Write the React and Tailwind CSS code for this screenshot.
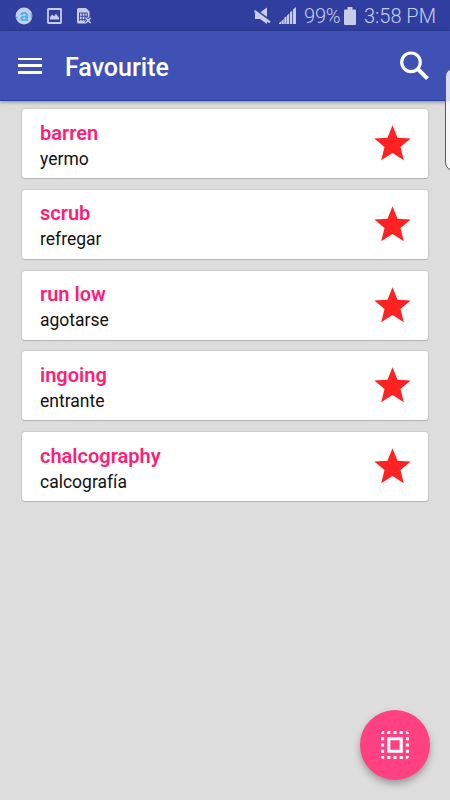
import React, { useState } from 'react';

const WORDS = [
    { id: 1, word: 'barren', translation: 'yermo' },
    { id: 2, word: 'scrub', translation: 'refregar' },
    { id: 3, word: 'run low', translation: 'agotarse' },
    { id: 4, word: 'ingoing', translation: 'entrante' },
    { id: 5, word: 'chalcography', translation: 'calcografía' },
];

function StatusBar() {
    return (
        <div className="flex h-[31px] shrink-0 items-center bg-[#303f9f] pl-[15px] pr-[14px] text-[#c9cdea]">
            <svg className="h-[18px] w-[18px] overflow-visible" viewBox="0 0 18 18">
                <circle cx="9" cy="9" r="8.4" fill="#c9cdea" />
                <circle cx="1.6" cy="10.5" r="1.1" fill="#4fb0e6" />
                <path d="M16.2 6v5.500" stroke="#4fb0e6" strokeWidth="1.2" />
                <text x="9" y="13.500" textAnchor="middle" fontFamily="Roboto" fontWeight="700" fontSize="17" fill="#4fb0e6">a</text>
            </svg>
            <svg className="ml-[14px] h-[16px] w-[15px]" viewBox="0 0 15 16">
                <rect x="1" y="1" width="13" height="14" rx="0.5" fill="none" stroke="currentColor" strokeWidth="1.8" />
                <path d="M3 11.5V9l2.2-2.4L7 8.2l2-2.5 3 3.8v2z" fill="currentColor" />
            </svg>
            <svg className="ml-[15px] h-[16px] w-[15px]" viewBox="0 0 15 16">
                <path d="M0 1.5Q0 0 1.500 0H9l3.500 3.500V9L11 10.500 9 9v6.500H1.500Q0 15.500 0 14z" fill="currentColor" />
                <path d="M2 5h8.500M2 8.300h8.500M2 11.600h6M2.500 5v8M5.200 5v8M7.900 5v8M10.300 5v4" stroke="#303f9f" strokeWidth="0.9" fill="none" />
                <path d="M8.500 9.800l5.200 5.200M13.700 9.800L8.500 15" stroke="#303f9f" strokeWidth="3" />
                <path d="M8.700 10l4.900 5M13.600 10l-4.900 5" stroke="currentColor" strokeWidth="1.6" />
            </svg>

            <svg className="ml-auto h-[18px] w-[17px]" viewBox="0 0 17 18">
                <path d="M1 5.500H6l7-5v16.500l-7-5H1z" fill="currentColor" />
                <path d="M0 2L16 13.500" stroke="#303f9f" strokeWidth="2.200" />
                <path d="M0.500 3.800L16 15.300" stroke="currentColor" strokeWidth="2.200" />
            </svg>
            <svg className="ml-[8px] h-[17px] w-[17px]" viewBox="0 0 17 17">
                <path d="M0 17v-1l2-1.500V17zM2.500 17v-3l2.200-2V17zM5.300 17v-6l2.200-2V17zM8 17V8.500l2.200-2V17zM11 17V5.500l2.200-2V17zM14 17V2.500L17 0v17z" fill="currentColor" />
            </svg>
            <span className="ml-[8px] mt-[2px] w-[37px] whitespace-nowrap text-[20px] leading-[31px] font-light tracking-[-0.2px]">99%</span>
            <svg className="ml-[3px] h-[18px] w-[12px]" viewBox="0 0 12 18">
                <path d="M3.500 0h5v2.500H11q1 0 1 1V17q0 1-1 1H1q-1 0-1-1V3.500q0-1 1-1h2.500z" fill="currentColor" />
            </svg>
            <span className="ml-[8px] mt-[2px] w-[72px] whitespace-nowrap text-[20px] leading-[31px] font-light">3:58 PM</span>
        </div>
    );
}

function AppBar() {
    return (
        <div className="z-10 flex h-[70px] shrink-0 items-center border-b border-[#2b3fa8] bg-[#3f51b5] pl-[18px] pr-[20px] text-white shadow-[0_1px_4px_rgba(0,0,0,0.4)]">
            <button className="flex h-[16px] w-[24px] flex-col justify-between" aria-label="Menu">
                <span className="h-[2.700px] w-full bg-white" />
                <span className="h-[2.700px] w-full bg-white" />
                <span className="h-[2.700px] w-full bg-white" />
            </button>
            <h1 className="ml-[23px] mt-[5px] text-[25px] font-medium">Favourite</h1>
            <button className="ml-auto" aria-label="Search">
                <svg className="h-[30px] w-[30px]" viewBox="0 0 30 30" fill="none" stroke="white">
                    <circle cx="11" cy="11.300" r="9.300" strokeWidth="3.200" />
                    <path d="M17.800 18l9.700 9.700" strokeWidth="4" />
                </svg>
            </button>
        </div>
    );
}

function WordCard({ item, onToggle }) {
    return (
        <div className="flex h-[69px] items-center rounded-[3px] bg-white pl-[18px] pr-[17px] shadow-[0_0_1px_1px_rgba(0,0,0,0.08),0_1px_1px_rgba(0,0,0,0.12)]">
            <div className="pt-[3.800px]">
                <p className="text-[20px] leading-[26px] font-semibold text-[#ff1e76]">{item.word}</p>
                <p className="text-[17.500px] leading-[26px] text-[#111111]">{item.translation}</p>
            </div>
            <button className="ml-auto pb-[1px]" onClick={() => onToggle(item.id)} aria-label="Toggle favourite">
                <svg className="h-[36px] w-[37px]" viewBox="0 0 37 36">
                    <path
                        d="M18.500 0.300l5 12.400 13.200 0.900-10.200 8.500 3.300 13.100-11.300-7.100-11.300 7.100 3.300-13.100L0.300 13.600l13.200-0.900z"
                        className={item.removed ? 'fill-[#cccccc]' : 'fill-[#ff2222]'}
                    />
                </svg>
            </button>
        </div>
    );
}

export default function App() {
    const [words, setWords] = useState(WORDS);

    const handleToggle = (id) => {
        setWords(words.map(w => (w.id === id ? { ...w, removed: !w.removed } : w)));
    };

    return (
        <div className="relative flex h-screen w-full flex-col overflow-hidden bg-[#dddddd] font-[Roboto,sans-serif]">
            <StatusBar />
            <AppBar />
            <div className="flex flex-col gap-[11.700px] pt-[8.400px] pl-[22px] pr-[22px]">
                {words.map(item => (
                    <WordCard key={item.id} item={item} onToggle={handleToggle} />
                ))}
            </div>

            {/* Edge panel handle */}
            <div className="absolute top-[68px] right-[-12px] z-20 h-[103px] w-[17px] rounded-[9px] border border-[#555566] bg-white/80" />

            <button
                className="absolute right-[20px] bottom-[20px] flex h-[70px] w-[70px] items-center justify-center rounded-full bg-[#ff4081] shadow-[0_4px_7px_rgba(0,0,0,0.3)]"
                aria-label="Select all"
            >
                <svg className="h-[28px] w-[28px]" viewBox="3 3 18 18" fill="white">
                    <path d="M3 5h2V3c-1.100 0-2 .9-2 2zm0 8h2v-2H3v2zm4 8h2v-2H7v2zM3 9h2V7H3v2zm10-6h-2v2h2V3zm6 0v2h2c0-1.100-.9-2-2-2zM5 21v-2H3c0 1.100.9 2 2 2zm-2-4h2v-2H3v2zM9 3H7v2h2V3zm2 18h2v-2h-2v2zm8-8h2v-2h-2v2zm0 8c1.100 0 2-.9 2-2h-2v2zm0-12h2V7h-2v2zm0 8h2v-2h-2v2zm-4 4h2v-2h-2v2zm0-16h2V3h-2v2zM7 17h10V7H7v10zm2-8h6v6H9V9z" />
                </svg>
            </button>
        </div>
    );
}
